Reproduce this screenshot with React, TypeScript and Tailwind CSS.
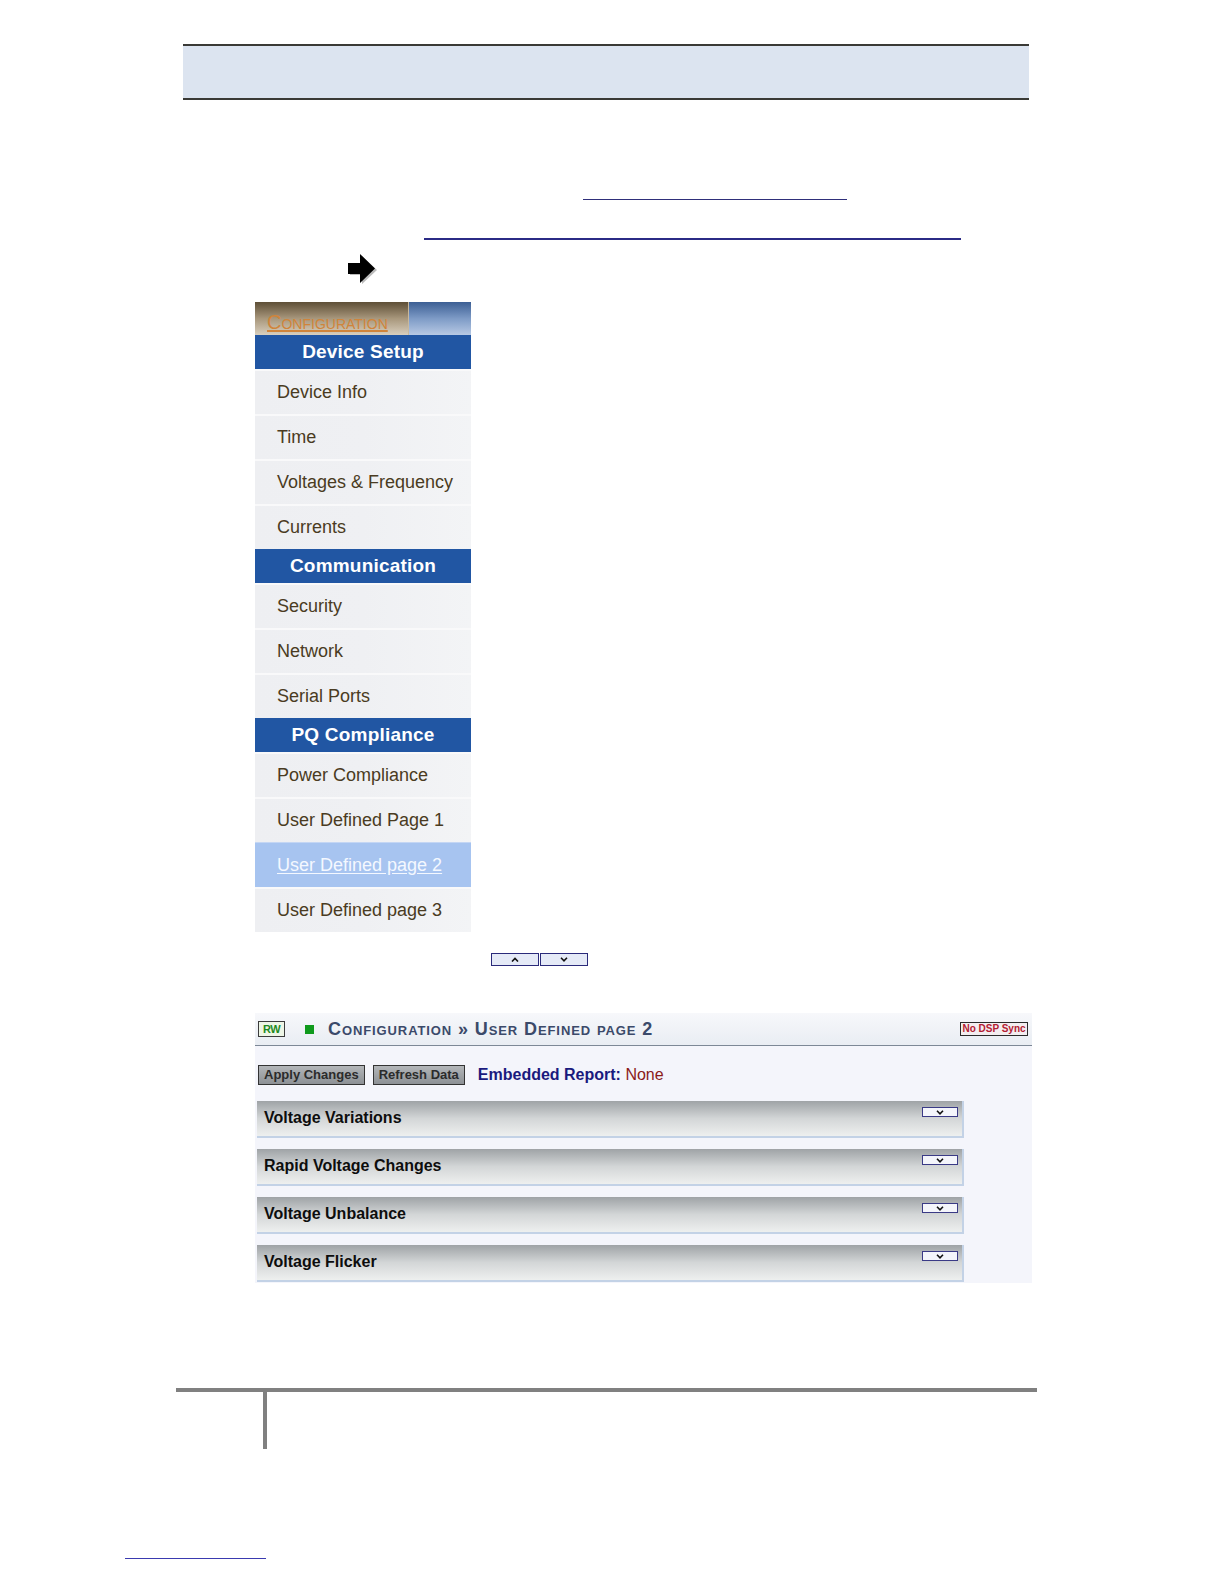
import React from "react";

const font = { fontFamily: '"Liberation Sans", Arial, sans-serif' };

function Chevron({ up = false }: { up?: boolean }) {
  return (
    <svg width="8" height="5" viewBox="0 0 8 5" className="block">
      {up ? (
        <path d="M1 4.5 L4 1.5 L7 4.5" stroke="#111" strokeWidth="1.6" fill="none" />
      ) : (
        <path d="M1 0.8 L4 3.8 L7 0.8" stroke="#111" strokeWidth="1.6" fill="none" />
      )}
    </svg>
  );
}

function MenuHeader({ label }: { label: string }) {
  return (
    <div className="h-[34px] bg-[#2156a3] flex items-center justify-center text-white font-bold text-[19px] tracking-[0.2px]">
      {label}
    </div>
  );
}

function MenuItem({ label, active = false }: { label: string; active?: boolean }) {
  return (
    <div
      className={
        active
          ? "h-[45px] bg-[#a7c4f0] border-t border-[#c4d6f4] flex items-center pl-[22px] text-[18px] text-[#f4f8ff] underline underline-offset-2"
          : "h-[45px] bg-gradient-to-r from-[#eeeff2] via-[#eff0f3] to-[#f3f4f6] border-t-2 border-[#f9f9fa] flex items-center pl-[22px] text-[18px] text-[#4a3b22]"
      }
    >
      {label}
    </div>
  );
}

function Section({ title }: { title: string }) {
  return (
    <div className="w-[707px] h-[37px] bg-gradient-to-b from-[#9fa3a6] via-[#d3d6d7] to-[#eef0ef] border-b-2 border-r-2 border-[#c3d2e6] flex items-start justify-between pl-[7px] pr-[4px]">
      <span className="text-[16px] font-bold text-[#0d0d0d] mt-[5px]">{title}</span>
      <div className="mt-[6px] w-[36px] h-[10px] border border-[#3a3a86] bg-[#f4f5fb] flex items-center justify-center">
        <Chevron />
      </div>
    </div>
  );
}

export default function App() {
  return (
    <div className="w-full h-[1584px] bg-white relative overflow-hidden" style={font}>
      {/* top band */}
      <div className="pt-[44px]">
        <div className="ml-[183px] w-[846px] h-[56px] border-y-2 border-[#3a3a36] bg-[#dce4f0]" />
      </div>

      {/* link lines */}
      <div className="mt-[99px] ml-[583px] w-[264px] h-px bg-[#2f2f7a]" />
      <div className="mt-[38px] ml-[424px] w-[537px] h-[2px] bg-[#2b2b86]" />

      {/* arrow */}
      <div className="mt-[13px] ml-[348px] w-[34px] h-[32px]">
        <svg width="34" height="32" viewBox="0 0 34 32">
          <path d="M2 12 H14 V3 L29 17 L14 31 V22 H2 Z" fill="#777" opacity="0.5" />
          <path d="M0 10 H12 V1 L27 15.5 L12 30 V21 H0 Z" fill="#000" />
        </svg>
      </div>

      {/* menu */}
      <div className="mt-[17px] ml-[255px] w-[216px]">
        <div className="h-[33px] flex">
          <div className="w-[153px] h-full bg-gradient-to-b from-[#5e4f37] via-[#a8977c] to-[#d9cfbe] flex items-end pl-[12px] pb-[3px]">
            <span className="text-[20px] text-[#d0843a] underline underline-offset-1 [font-variant:small-caps] leading-none">
              Configuration
            </span>
          </div>
          <div className="flex-1 h-full border-l border-[#c9b99d] bg-gradient-to-b from-[#3c5f94] via-[#7e9bc6] to-[#b7c9e4]" />
        </div>
        <MenuHeader label="Device Setup" />
        <MenuItem label="Device Info" />
        <MenuItem label="Time" />
        <MenuItem label="Voltages & Frequency" />
        <MenuItem label="Currents" />
        <MenuHeader label="Communication" />
        <MenuItem label="Security" />
        <MenuItem label="Network" />
        <MenuItem label="Serial Ports" />
        <MenuHeader label="PQ Compliance" />
        <MenuItem label="Power Compliance" />
        <MenuItem label="User Defined Page 1" />
        <MenuItem label="User Defined page 2" active />
        <MenuItem label="User Defined page 3" />
      </div>

      {/* up/down buttons */}
      <div className="mt-[21px] ml-[491px] flex gap-px">
        <div className="w-[48px] h-[13px] border border-[#2a2a7a] bg-[#e5eaf7] flex items-center justify-center">
          <Chevron up />
        </div>
        <div className="w-[48px] h-[13px] border border-[#2a2a7a] bg-[#e5eaf7] flex items-center justify-center">
          <Chevron />
        </div>
      </div>

      {/* configuration panel */}
      <div className="mt-[47px] ml-[255px] w-[777px] h-[270px] bg-[#f4f5fb]">
        <div className="h-[33px] bg-gradient-to-b from-[#f7f8fb] to-[#e9edf3] border-b border-[#7d8896] flex items-center pl-[3px] pr-[4px]">
          <div className="w-[27px] h-[16px] border border-[#3c3c3c] bg-[#eef6e6] flex items-center justify-center text-[11px] font-bold text-[#1f8a1f] leading-none tracking-[-0.5px]">
            RW
          </div>
          <div className="ml-[20px] w-[9px] h-[9px] bg-[#0f9a1c]" />
          <div className="ml-[14px] text-[18px] font-bold text-[#3b4a6a] [font-variant:small-caps] tracking-[0.9px] leading-none">
            Configuration » User Defined page 2
          </div>
          <div className="ml-auto w-[68px] h-[14px] border border-[#2a2a2a] bg-[#f3eef0] flex items-center justify-center text-[10px] font-bold text-[#b32033] leading-none">
            No DSP Sync
          </div>
        </div>

        <div className="pl-[3px] pt-[19px] flex items-center">
          <div className="h-[20px] px-[5px] border border-[#333] bg-gradient-to-b from-[#b3b6b9] to-[#8d9195] flex items-center text-[13px] font-bold text-[#2b2b2b]">
            Apply Changes
          </div>
          <div className="ml-[8px] h-[20px] px-[5px] border border-[#333] bg-gradient-to-b from-[#b3b6b9] to-[#8d9195] flex items-center text-[13px] font-bold text-[#2b2b2b]">
            Refresh Data
          </div>
          <div className="ml-[13px] text-[16px] leading-none">
            <span className="font-bold text-[#1a1a7e]">Embedded Report: </span>
            <span className="text-[#8a1a1a]">None</span>
          </div>
        </div>

        <div className="ml-[2px] mt-[16px] flex flex-col gap-[11px]">
          <Section title="Voltage Variations" />
          <Section title="Rapid Voltage Changes" />
          <Section title="Voltage Unbalance" />
          <Section title="Voltage Flicker" />
        </div>
      </div>

      {/* footer lines */}
      <div className="mt-[105px] ml-[176px] w-[861px] h-[4px] bg-[#808080]" />
      <div className="ml-[263px] w-[4px] h-[57px] bg-[#808080]" />

      <div className="mt-[109px] ml-[125px] w-[141px] h-px bg-[#3a3ab0]" />
    </div>
  );
}
